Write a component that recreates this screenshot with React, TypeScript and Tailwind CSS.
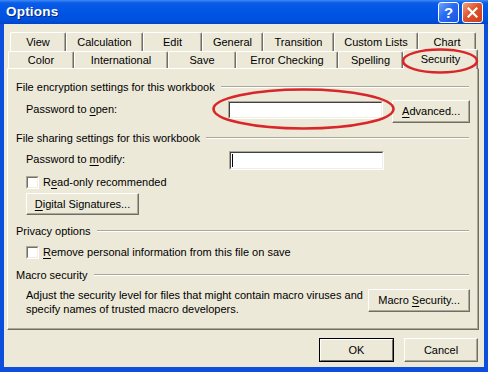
import React from "react";

const F = "font-['Liberation_Sans',Arial,sans-serif]";

function U({ children }: { children: React.ReactNode }) {
  return <span className="underline underline-offset-[2px] decoration-1">{children}</span>;
}

function Btn({ children, className = "", def = false }: { children: React.ReactNode; className?: string; def?: boolean }) {
  return (
    <div
      className={`flex items-center justify-center bg-[#ece9d8] text-black text-[11px] border ${
        def ? "border-black" : "border-t-white border-l-white border-r-[#716f64] border-b-[#716f64]"
      } ${className}`}
    >
      <div
        className={`w-full h-full flex items-center justify-center ${
          def
            ? "border border-t-white border-l-white border-r-[#716f64] border-b-[#716f64]"
            : "shadow-[inset_-1px_-1px_0_#aca899]"
        }`}
      >
        {children}
      </div>
    </div>
  );
}

function Input({ className = "", cursor = false }: { className?: string; cursor?: boolean }) {
  return (
    <div className={`border border-t-[#aca899] border-l-[#aca899] border-r-white border-b-white ${className}`}>
      <div className="w-full h-full bg-white border border-t-[#404040] border-l-[#404040] border-r-[#f1efe2] border-b-[#f1efe2] flex items-center">
        {cursor && <div className="ml-[1px] w-[1px] h-[13px] bg-black" />}
      </div>
    </div>
  );
}

function Check() {
  return (
    <div className="w-[13px] h-[13px] border border-t-[#aca899] border-l-[#aca899] border-r-white border-b-white">
      <div className="w-full h-full bg-white border border-t-[#716f64] border-l-[#716f64] border-r-[#f1efe2] border-b-[#f1efe2]" />
    </div>
  );
}

function Header({ children, className = "" }: { children: React.ReactNode; className?: string }) {
  return (
    <div className={`flex items-center h-[14px] pr-[1px] ${className}`}>
      <span className="whitespace-nowrap">{children}</span>
      <div className="flex-1 ml-[6px] border-t border-t-[#aca899] border-b border-b-white h-0" />
    </div>
  );
}

function Tab({ label, w, sel = false }: { label: string; w: number; sel?: boolean }) {
  return (
    <div
      style={{ width: w }}
      className={`relative flex items-center justify-center whitespace-nowrap border-l border-t border-l-white border-t-white border-r border-r-[#716f64] rounded-tl-[2px] rounded-tr-[2px] shadow-[inset_-1px_0_0_#aca899] bg-[#ece9d8] ${
        sel ? "h-[20px] -mt-[3px] z-10 -mb-[1px] pb-[1px]" : "h-full"
      }`}
    >
      {label}
    </div>
  );
}

export default function App() {
  const row1: [string, number][] = [
    ["View", 56],
    ["Calculation", 77],
    ["Edit", 59],
    ["General", 61],
    ["Transition", 71],
    ["Custom Lists", 84],
    ["Chart", 58],
  ];
  const row2: [string, number][] = [
    ["Color", 66],
    ["International", 94],
    ["Save", 68],
    ["Error Checking", 102],
    ["Spelling", 65],
  ];
  return (
    <div className={`${F} w-[488px] h-[372px] bg-[#0b4fdc] flex flex-col text-[11px] text-black relative overflow-hidden`}>
      {/* Title bar */}
      <div className="h-[24px] flex items-center justify-between pl-[6px] pr-[5px] bg-[linear-gradient(to_bottom,#3f8cf3_0%,#0a5ce8_12%,#0055e5_50%,#0050dd_85%,#0043c6_100%)]">
        <span className="text-white font-bold text-[13.5px] tracking-[0.2px] [text-shadow:1px_1px_0_#0a2a7a]">Options</span>
        <div className="flex gap-[3px] mt-[1px]">
          <div className="w-[21px] h-[21px] rounded-[3px] border border-white bg-[linear-gradient(135deg,#6fa2ff_0%,#2a6bf2_45%,#1a54e0_100%)] flex items-center justify-center text-white font-bold text-[15px] leading-none">
            ?
          </div>
          <div className="w-[21px] h-[21px] rounded-[3px] border border-white bg-[linear-gradient(135deg,#f0a083_0%,#e0532c_45%,#c8401c_100%)] flex items-center justify-center">
            <svg width="11" height="11" viewBox="0 0 11 11">
              <path d="M1.5 1.5 L9.5 9.5 M9.5 1.5 L1.5 9.5" stroke="white" strokeWidth="2.2" strokeLinecap="square" />
            </svg>
          </div>
        </div>
      </div>

      {/* Body */}
      <div className="flex-1 mx-[4px] mb-[5px] bg-[#ece9d8] flex flex-col pl-[3px] pr-[5px] pt-[8px]">
        {/* Tabs */}
        <div className="flex h-[19px] pl-[3px]">
          {row1.map(([l, w]) => (
            <Tab key={l} label={l} w={w} />
          ))}
        </div>
        <div className="flex h-[17px] pl-[1px] items-end">
          {row2.map(([l, w]) => (
            <Tab key={l} label={l} w={w} />
          ))}
          <Tab label="Security" w={75} sel />
        </div>

        {/* Panel */}
        <div className="h-[262px] border border-t-white border-l-white border-r-[#716f64] border-b-[#716f64] shadow-[inset_-1px_-1px_0_#aca899] pl-[8px] pr-[8px] pt-[11px] flex flex-col">
          <Header>File encryption settings for this workbook</Header>
          <div className="flex items-start mt-[6px] h-[23px]">
            <span className="ml-[10px] mt-[1px] w-[203px]">
              Password to <U>o</U>pen:
            </span>
            <Input className="w-[156px] h-[18px] mt-[1px]" />
            <Btn className="ml-[9px] w-[78px] h-[23px]">
              <span>
                <U>A</U>dvanced...
              </span>
            </Btn>
          </div>
          <Header className="mt-[8px]">File sharing settings for this workbook</Header>
          <div className="flex items-start mt-[6px] h-[19px]">
            <span className="ml-[10px] w-[203px]">
              Password to <U>m</U>odify:
            </span>
            <Input className="w-[155px] h-[19px]" cursor />
          </div>
          <div className="flex items-center mt-[6px] h-[13px] ml-[10px] gap-[4px]">
            <Check />
            <span>
              R<U>e</U>ad-only recommended
            </span>
          </div>
          <Btn className="mt-[4px] ml-[10px] w-[113px] h-[22px]">
            <span>
              <U>D</U>igital Signatures...
            </span>
          </Btn>
          <Header className="mt-[9px]">Privacy options</Header>
          <div className="flex items-center mt-[8px] h-[13px] ml-[10px] gap-[4px]">
            <Check />
            <span>
              <U>R</U>emove personal information from this file on save
            </span>
          </div>
          <Header className="mt-[9px]">Macro security</Header>
          <div className="flex items-start mt-[6px] ml-[10px]">
            <div className="w-[343px] leading-[14px]">
              Adjust the security level for files that might contain macro viruses and
              <br />
              specify names of trusted macro developers.
            </div>
            <Btn className="mt-[1px] w-[102px] h-[23px]">
              <span>
                Macro <U>S</U>ecurity...
              </span>
            </Btn>
          </div>
        </div>

        {/* Bottom buttons */}
        <div className="flex justify-end gap-[10px] mt-[8px] pr-[1px]">
          <Btn def className="w-[75px] h-[24px]">
            OK
          </Btn>
          <Btn className="w-[74px] h-[24px]">Cancel</Btn>
        </div>
      </div>

      {/* Red annotation ellipses */}
      <svg className="absolute left-0 top-0 z-20 pointer-events-none" width="488" height="372" viewBox="0 0 488 372">
        <ellipse cx="440" cy="61" rx="37" ry="11.5" fill="none" stroke="#d8262a" strokeWidth="2.6" />
        <ellipse cx="303.5" cy="109" rx="90" ry="19.5" fill="none" stroke="#d8262a" strokeWidth="2.6" />
      </svg>
    </div>
  );
}
